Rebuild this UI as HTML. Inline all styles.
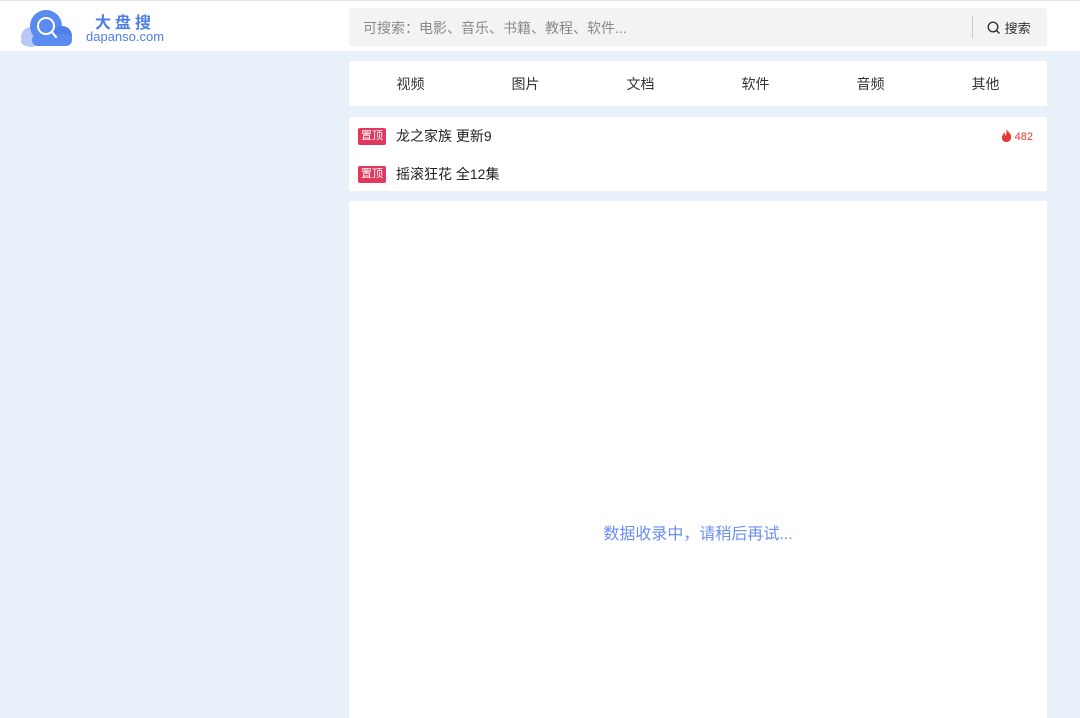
<!DOCTYPE html>
<html><head><meta charset="utf-8"><style>
*{margin:0;padding:0;box-sizing:border-box}
body{width:1080px;height:718px;overflow:hidden;background:#e8f1fa;font-family:"Liberation Sans","Noto Sans CJK SC",sans-serif;position:relative}
.hdr{position:absolute;left:0;top:0;width:1080px;height:51px;background:#fff;border-top:1px solid #e6e6e6}
.search{position:absolute;left:349px;top:7px;width:698px;height:38px;background:#f3f3f3;border-radius:2px}
.search .ph{position:absolute;left:14px;top:10px;font-size:14px;color:#888}
.search .sep{position:absolute;left:623px;top:8px;width:1px;height:22px;background:#ccc}
.search .btn{position:absolute;left:638px;top:10px;font-size:13px;color:#333}
.panel{position:absolute;left:349px;width:698px;background:#fff}
.nav{top:61px;height:45px;display:flex;padding:0 4px}
.nav div{width:115px;text-align:center;line-height:47px;font-size:14px;color:#333}
.tops{top:117px;height:74px}
.row{position:absolute;left:9px;height:18px;display:flex;align-items:center}
.tag{background:#e0395d;color:#fff;font-size:11px;padding:0 3px;line-height:17px;border-radius:2px;margin-right:10px}
.row span.t{font-size:14px;color:#222}
.main{top:201px;height:517px}
.empty{position:absolute;top:319px;width:100%;text-align:center;font-size:16px;color:#6b8ef0}
</style></head><body>
<div class="hdr">
<svg style="position:absolute;left:18px;top:7px" width="56" height="40" viewBox="0 0 56 40">
<circle cx="13" cy="29" r="10" fill="#b7c9f6"/>
<rect x="3" y="28" width="30" height="10" rx="5" fill="#b7c9f6"/>
<circle cx="28" cy="18" r="16" fill="#5a8bef"/>
<circle cx="44" cy="28" r="10" fill="#4f7ee8"/>
<rect x="14" y="26" width="40" height="12" rx="6" fill="#5a8bef"/>
<circle cx="28" cy="18" r="8" fill="none" stroke="#fff" stroke-width="2"/>
<line x1="34" y1="24" x2="38" y2="29" stroke="#fff" stroke-width="2.2" stroke-linecap="round"/>
</svg>
<div style="position:absolute;left:95px;top:8px;font-size:16px;color:#4f7ee8;letter-spacing:4px;font-weight:bold">大盘搜</div>
<div style="position:absolute;left:86px;top:28px;font-size:13px;color:#4f7ee8">dapanso.com</div>
<div class="search"><div class="ph">可搜索：电影、音乐、书籍、教程、软件...</div><div class="sep"></div>
<div class="btn"><svg width="14" height="14" viewBox="0 0 14 14" style="vertical-align:-2px"><circle cx="6" cy="6" r="4.8" fill="none" stroke="#333" stroke-width="1.4"/><line x1="9.5" y1="9.5" x2="12.5" y2="12.5" stroke="#333" stroke-width="1.4"/></svg> 搜索</div></div>
</div>
<div class="panel nav"><div>视频</div><div>图片</div><div>文档</div><div>软件</div><div>音频</div><div>其他</div></div>
<div class="panel tops">
<div class="row" style="top:10px"><span class="tag">置顶</span><span class="t">龙之家族 更新9</span></div>
<div class="row" style="top:48px"><span class="tag">置顶</span><span class="t">摇滚狂花 全12集</span></div>
<div style="position:absolute;right:14px;top:11px;font-size:11px;color:#e53935"><svg width="11" height="14" viewBox="0 0 11 14" style="vertical-align:-2px"><path d="M5 0C6 4 11 5 10 10C9.5 13 7 14 5.5 14C3 14 0.5 12.5 1 9C1.3 7 3 6 3 4C4 5.5 4 7 4.5 8C5.5 6 6 3 5 0Z" fill="#e53935"/></svg> 482</div>
</div>
<div class="panel main"><div class="empty">数据收录中，请稍后再试...</div></div>
</body></html>
